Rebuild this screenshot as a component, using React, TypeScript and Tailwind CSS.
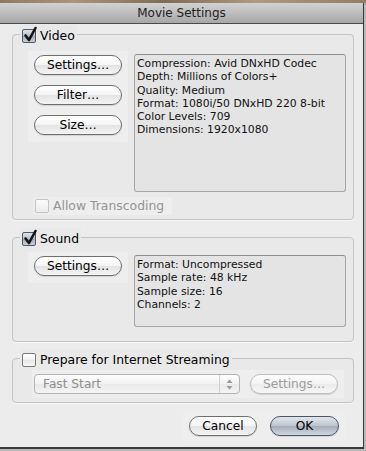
import type { ReactNode } from 'react';

const font = { fontFamily: '"DejaVu Sans", "Liberation Sans", sans-serif' };

function CheckBox({ checked, disabled }: { checked?: boolean; disabled?: boolean }) {
  return (
    <span
      className={`relative inline-block h-[14px] w-[14px] shrink-0 rounded-[2px] border ${
        checked
          ? 'border-[#4f5864] bg-[linear-gradient(to_bottom,#dfe4ea_0%,#b3bcc7_50%,#a1abb8_51%,#c9d0d8_100%)]'
          : disabled
            ? 'border-[#c4c4c4] bg-[linear-gradient(to_bottom,#fbfbfb,#ececec)]'
            : 'border-[#7a7a7a] bg-[linear-gradient(to_bottom,#ffffff_0%,#f1f1f1_50%,#e6e6e6_51%,#f7f7f7_100%)]'
      }`}
    >
      {checked && (
        <svg
          className="absolute -top-[3px] left-[1px] overflow-visible"
          width="13"
          height="15"
          viewBox="0 0 13 15"
        >
          <path
            d="M1.5 8.5 L5 13 L11.5 1"
            fill="none"
            stroke="#141414"
            strokeWidth="2.6"
            strokeLinecap="round"
            strokeLinejoin="round"
          />
        </svg>
      )}
    </span>
  );
}

function PillButton({
  children,
  className,
  primary,
  disabled,
}: {
  children: ReactNode;
  className: string;
  primary?: boolean;
  disabled?: boolean;
}) {
  const skin = primary
    ? 'border-[#4d5560] text-black bg-[linear-gradient(to_bottom,#e2e7ed_0%,#bcc4ce_50%,#a2acb9_51%,#d0d7df_100%)]'
    : disabled
      ? 'border-[#bdbdbd] text-[#9c9c9c] bg-[linear-gradient(to_bottom,#fdfdfd_0%,#f3f3f3_50%,#ececec_51%,#f6f6f6_100%)]'
      : 'border-[#6f6f6f] text-black bg-[linear-gradient(to_bottom,#ffffff_0%,#f4f4f4_50%,#e3e3e3_51%,#f4f4f4_100%)]';
  return (
    <div
      className={`flex h-[20px] items-center justify-center rounded-full border text-[12.2px] leading-none shadow-[0_1px_1px_rgba(0,0,0,0.12)] ${skin} ${className}`}
    >
      {children}
    </div>
  );
}

function InfoBox({ lines, className }: { lines: string[]; className: string }) {
  return (
    <div
      className={`w-[212px] rounded-[3px] border border-[#a6a6a6] border-t-[#8e8e8e] bg-[#e4e4e4] px-[2px] pt-[2px] text-[10.8px] leading-[13.3px] text-[#111] ${className}`}
    >
      {lines.map((l) => (
        <div key={l} className="whitespace-nowrap">
          {l}
        </div>
      ))}
    </div>
  );
}

function Group({
  label,
  checked,
  children,
  className,
}: {
  label: string;
  checked?: boolean;
  children: ReactNode;
  className: string;
}) {
  return (
    <fieldset
      className={`ml-[12px] w-[342px] rounded-[4px] border border-[#c3c3c3] bg-[#e9e9e9] shadow-[0_1px_0_#f7f7f7] ${className}`}
    >
      <legend className="ml-[7px] flex items-center gap-[4px] bg-[#e9e9e9] px-[2px] pt-[4px] text-[12.4px] leading-[14px] text-black">
        <CheckBox checked={checked} />
        <span>{label}</span>
      </legend>
      {children}
    </fieldset>
  );
}

export default function App() {
  return (
    <div className="h-[451px] w-[366px] overflow-hidden bg-[#b9b9b9]" style={font}>
      <div className="h-[3px] w-full bg-[linear-gradient(to_right,#8d7b60,#a8957a_20%,#7e6d55_45%,#ad9b7f_70%,#917f64)]" />
      <div className="flex h-[446px] w-[364px] flex-col border-r border-b-2 border-[#3a3a3a] bg-[#ececec]">
        {/* Title bar */}
        <div className="flex h-[21px] shrink-0 items-center justify-center border-b border-[#4a4a4a] bg-[linear-gradient(to_bottom,#d2d2d2,#a7a7a7)] text-[12px] text-[#222]">
          Movie Settings
        </div>

        {/* Video */}
        <Group label="Video" checked className="mt-[1px]">
          <div className="flex items-start pl-[15px]">
            <div className="mt-[8px] flex w-[100px] flex-col gap-[10px] bg-[#eeeeee] px-[6px] pt-[4px] pb-[7px]">
              <PillButton className="w-[88px]">Settings…</PillButton>
              <PillButton className="w-[88px]">Filter…</PillButton>
              <PillButton className="w-[88px]">Size…</PillButton>
            </div>
            <InfoBox
              className="mt-[11px] ml-[6px] h-[138px]"
              lines={[
                'Compression: Avid DNxHD Codec',
                'Depth: Millions of Colors+',
                'Quality: Medium',
                'Format: 1080i/50 DNxHD 220 8-bit',
                'Color Levels: 709',
                'Dimensions: 1920x1080',
              ]}
            />
          </div>
          <div className="mt-[5px] mb-[4px] ml-[20px] flex w-[139px] items-center gap-[4px] bg-[#eeeeee] px-[2px] py-[2px] text-[12.4px] leading-[14px] text-[#949494]">
            <CheckBox disabled />
            <span className="whitespace-nowrap">Allow Transcoding</span>
          </div>
        </Group>

        {/* Sound */}
        <Group label="Sound" checked className="mt-[8px]">
          <div className="flex items-start pl-[15px] pb-[14px]">
            <div className="mt-[6px] w-[100px] bg-[#eeeeee] px-[6px] pt-[4px] pb-[7px]">
              <PillButton className="w-[88px]">Settings…</PillButton>
            </div>
            <InfoBox
              className="mt-[9px] ml-[6px] h-[72px]"
              lines={['Format: Uncompressed', 'Sample rate: 48 kHz', 'Sample size: 16', 'Channels: 2']}
            />
          </div>
        </Group>

        {/* Internet streaming */}
        <Group label="Prepare for Internet Streaming" className="mt-[7px]">
          <div className="mt-[3px] mb-[4px] ml-[19px] flex w-[312px] items-center gap-[10px] bg-[#eeeeee] px-[2px] py-[4px]">
            <div className="flex h-[20px] w-[206px] items-center rounded-[4px] border border-[#b3b3b3] bg-[linear-gradient(to_bottom,#ffffff,#f1f1f1_50%,#e9e9e9_51%,#f5f5f5)] text-[12.2px] text-[#8e8e8e]">
              <span className="flex-1 pl-[8px]">Fast Start</span>
              <span className="flex h-full w-[20px] items-center justify-center border-l border-[#cfcfcf]">
                <svg width="7" height="11" viewBox="0 0 7 11">
                  <path d="M3.5 0.5 L6.5 4 L0.5 4 Z" fill="#9a9a9a" />
                  <path d="M3.5 10.5 L6.5 7 L0.5 7 Z" fill="#9a9a9a" />
                </svg>
              </span>
            </div>
            <PillButton disabled className="w-[88px]">
              Settings…
            </PillButton>
          </div>
        </Group>

        {/* Dialog buttons */}
        <div className="mt-[8px] mr-[18px] flex justify-end gap-[13px] self-end bg-[#eeeeee] px-[6px] py-[5px]">
          <PillButton className="w-[68px]">Cancel</PillButton>
          <PillButton primary className="w-[69px]">
            OK
          </PillButton>
        </div>
      </div>
    </div>
  );
}
